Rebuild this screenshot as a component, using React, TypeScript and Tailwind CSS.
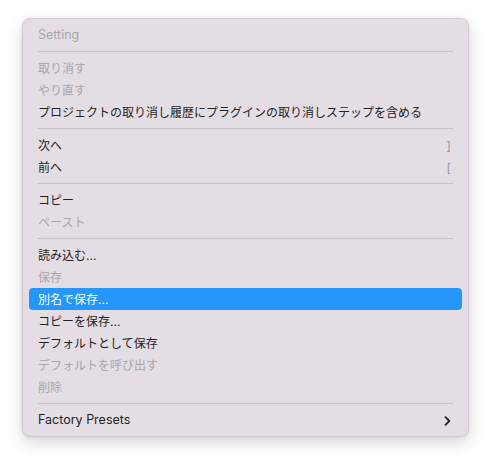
import React from 'react';

type Item =
  | { kind: 'sep' }
  | { kind: 'item'; label: string; disabled?: boolean; active?: boolean; shortcut?: string; submenu?: boolean };

const items: Item[] = [
  { kind: 'item', label: 'Setting', disabled: true },
  { kind: 'sep' },
  { kind: 'item', label: '取り消す', disabled: true },
  { kind: 'item', label: 'やり直す', disabled: true },
  { kind: 'item', label: 'プロジェクトの取り消し履歴にプラグインの取り消しステップを含める' },
  { kind: 'sep' },
  { kind: 'item', label: '次へ', shortcut: ']' },
  { kind: 'item', label: '前へ', shortcut: '[' },
  { kind: 'sep' },
  { kind: 'item', label: 'コピー' },
  { kind: 'item', label: 'ペースト', disabled: true },
  { kind: 'sep' },
  { kind: 'item', label: '読み込む...' },
  { kind: 'item', label: '保存', disabled: true },
  { kind: 'item', label: '別名で保存...', active: true },
  { kind: 'item', label: 'コピーを保存...' },
  { kind: 'item', label: 'デフォルトとして保存' },
  { kind: 'item', label: 'デフォルトを呼び出す', disabled: true },
  { kind: 'item', label: '削除', disabled: true },
  { kind: 'sep' },
  { kind: 'item', label: 'Factory Presets', submenu: true },
];

const Chevron = () => (
  <svg width="7" height="10" viewBox="0 0 7 10" fill="none">
    <path d="M1.5 1.2L5.3 5L1.5 8.8" stroke="#2a262a" strokeWidth="1.9" strokeLinecap="round" strokeLinejoin="round" />
  </svg>
);

export default function App() {
  return (
    <div className="min-h-screen bg-white pt-[18px] pl-[22px]">
      <div
        className="w-[447px] rounded-[8px] border border-[#d0cbd0] bg-[#e4dee4] px-[6px] pt-[5px] pb-[5px] shadow-[0_6px_16px_rgba(0,0,0,0.16),0_0_3px_rgba(0,0,0,0.08)]"
        style={{ fontFamily: 'Inter, "Noto Sans CJK JP", sans-serif' }}
      >
        {items.map((it, i) =>
          it.kind === 'sep' ? (
            <div key={i} className="mx-[9px] my-[5px] h-px bg-[#c9c3c9]" />
          ) : (
            <div
              key={i}
              className={
                'flex h-[22px] items-center justify-between rounded-[4px] pl-[9px] pr-[11px] pt-px ' +
                (/^[A-Za-z]/.test(it.label) ? 'text-[12.5px] ' : 'text-[12px] ') +
                (it.active ? 'bg-[#2596fa] text-white' : it.disabled ? 'text-[#aaa5aa]' : 'text-[#231f23]')
              }
            >
              <span className="whitespace-nowrap">{it.label}</span>
              {it.shortcut && <span className="text-[12px] text-[#9a969a]">{it.shortcut}</span>}
              {it.submenu && <Chevron />}
            </div>
          )
        )}
      </div>
    </div>
  );
}
